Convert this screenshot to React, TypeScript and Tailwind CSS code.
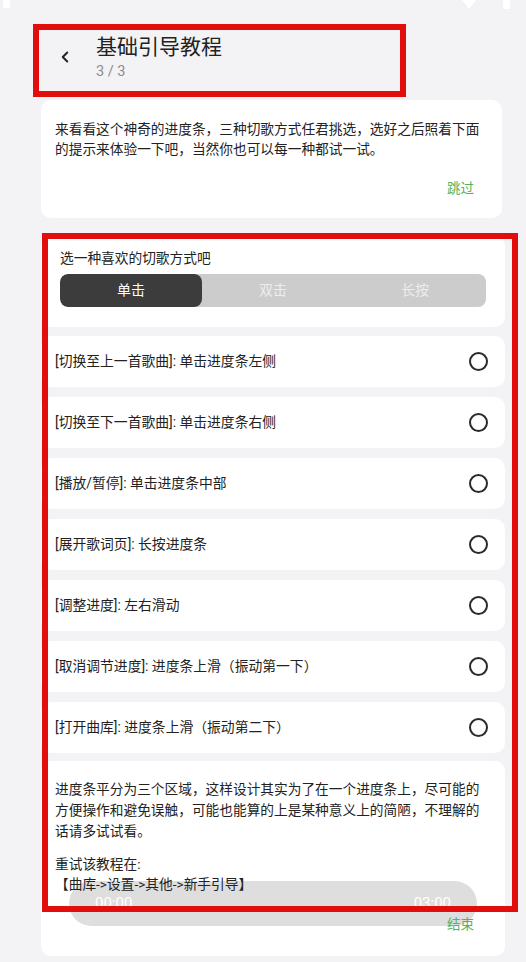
import { ChevronLeft } from 'lucide-react'

const rows = [
    '[切换至上一首歌曲]: 单击进度条左侧',
    '[切换至下一首歌曲]: 单击进度条右侧',
    '[播放/暂停]: 单击进度条中部',
    '[展开歌词页]: 长按进度条',
    '[调整进度]: 左右滑动',
    '[取消调节进度]: 进度条上滑（振动第一下）',
    '[打开曲库]: 进度条上滑（振动第二下）',
]

const modes = ['单击', '双击', '长按']

const App = () => {
    return (
        <div
            className="relative min-h-[962px] w-full overflow-hidden bg-[#f3f3f5] text-[#222]"
            style={{ fontFamily: 'Roboto, "Noto Sans CJK SC", sans-serif' }}
        >
            {/* status bar */}
            <div className="absolute left-0 right-0 top-0 flex h-[10px] items-start justify-between pl-[3px] pr-[16px]">
                <div className="h-[8px] w-[7px] rounded-[1px] bg-white" />
                <div className="flex items-start gap-[27px]">
                    <svg width="14" height="9" viewBox="0 0 14 9">
                        <path d="M0 0 L14 0 L7 9 Z" fill="#fff" />
                    </svg>
                    <div className="h-[9px] w-[7px] rounded-[1px] bg-white" />
                </div>
            </div>

            {/* header */}
            <div className="flex items-start pl-[56px] pt-[34px]">
                <ChevronLeft size={18} strokeWidth={2.6} className="mt-[14px] text-[#222]" />
                <div className="ml-[22px]">
                    <h1 className="text-[21px] leading-[26px] text-[#222]">基础引导教程</h1>
                    <p className="mt-[2px] text-[14.5px] leading-[19px] text-[#8c8c8c]">3 / 3</p>
                </div>
            </div>

            {/* intro */}
            <div className="ml-[41px] mt-[19px] w-[461px] rounded-[10px] bg-white px-[14px] pb-[20px] pt-[19px]">
                <p className="text-[13.7px] leading-[20px]">
                    来看看这个神奇的进度条，三种切歌方式任君挑选，选好之后照着下面的提示来体验一下吧，当然你也可以每一种都试一试。
                </p>
                <div className="mt-[19px] flex justify-end pr-[14px]">
                    <span className="text-[13.5px] leading-[20px] text-[#55b45a]">跳过</span>
                </div>
            </div>

            {/* mode picker */}
            <div className="ml-[41px] mt-[18px] w-[464px] rounded-[10px] bg-white px-[19px] pb-[20px] pt-[12px]">
                <p className="text-[13.7px] leading-[20px]">选一种喜欢的切歌方式吧</p>
                <div className="mt-[6px] grid h-[33px] grid-cols-3 overflow-hidden rounded-[8px] bg-[#cccccc]">
                    {modes.map((m, i) => (
                        <div
                            key={m}
                            className={
                                i === 0
                                    ? 'flex items-center justify-center rounded-[8px] bg-[#3c3c3c] text-[14px] text-white'
                                    : 'flex items-center justify-center text-[14px] text-[#ededed]'
                            }
                        >
                            {m}
                        </div>
                    ))}
                </div>
            </div>

            {/* steps */}
            <div className="ml-[41px] mt-[9px] flex w-[464px] flex-col gap-[10px]">
                {rows.map((r) => (
                    <div key={r} className="flex h-[51px] items-center justify-between rounded-[10px] bg-white pl-[14px] pr-[17px]">
                        <span className="text-[13.8px]">{r}</span>
                        <div className="h-[19px] w-[19px] rounded-full border-[2px] border-[#2a2a2a]" />
                    </div>
                ))}
            </div>

            {/* summary */}
            <div className="relative ml-[41px] mt-[8px] w-[464px] rounded-[10px] bg-white px-[14px] pb-[22px] pt-[18px]">
                <div className="absolute left-[28px] top-[120px] flex h-[45px] w-[408px] items-center justify-between rounded-full bg-[#dedede] px-[26px] text-[15px] text-white">
                    <span>00:00</span>
                    <span>03:00</span>
                </div>
                <p className="relative text-[13.7px] leading-[21px]">
                    进度条平分为三个区域，这样设计其实为了在一个进度条上，尽可能的方便操作和避免误触，可能也能算的上是某种意义上的简陋，不理解的话请多试试看。
                </p>
                <div className="relative mt-[12px] text-[13.7px] leading-[20px]">
                    <p>重试该教程在:</p>
                    <p>【曲库-&gt;设置-&gt;其他-&gt;新手引导】</p>
                </div>
                <div className="relative mt-[20px] flex justify-end pr-[17px]">
                    <span className="text-[13.5px] leading-[20px] text-[#55b45a]">结束</span>
                </div>
            </div>

            {/* annotation boxes */}
            <div className="pointer-events-none absolute left-[33px] top-[24px] h-[73px] w-[373px] border-[6px] border-[#e20d0d]" />
            <div className="pointer-events-none absolute left-[42px] top-[233px] h-[679px] w-[476px] border-[6px] border-[#e20d0d]" />
        </div>
    )
}

export default App
